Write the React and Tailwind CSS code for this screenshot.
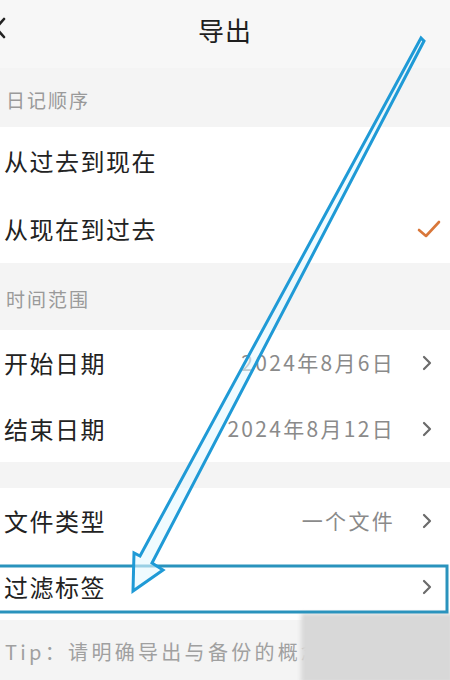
import React from "react";

const font = { fontFamily: '"Noto Sans CJK SC", "Noto Sans", sans-serif' };

function Chevron() {
  return (
    <svg width="12" height="16" viewBox="0 0 12 16" className="shrink-0">
      <path d="M3 2 L9 8 L3 14" fill="none" stroke="#6b6b6b" strokeWidth="2.2" strokeLinecap="round" strokeLinejoin="round" />
    </svg>
  );
}

function Section({ title, h = "h-[67px]" }) {
  return (
    <div className={`${h} bg-[#f4f4f4] flex items-center pl-[6px] pt-[6px]`}>
      {title && <span className="text-[19px] tracking-[2px] text-[#9a9a9a]">{title}</span>}
    </div>
  );
}

function Row({ label, value, chevron, check, h = "h-[66px]" }) {
  return (
    <div className={`${h} bg-white flex items-center pl-[4px] pr-[17px]`}>
      <span className="text-[24px] tracking-[1.5px] text-[#222222] flex-1">{label}</span>
      {value && <span className="text-[21px] tracking-[2.3px] text-[#8a8a8a] mr-[26px]">{value}</span>}
      {chevron && <Chevron />}
      {check && (
        <svg width="24" height="20" viewBox="0 0 24 20" className="-mr-[8px]">
          <path d="M2 11 L9 17 L22 3" fill="none" stroke="#d9773a" strokeWidth="2.6" strokeLinecap="round" strokeLinejoin="round" />
        </svg>
      )}
    </div>
  );
}

export default function App() {
  return (
    <div className="relative w-[450px] h-[680px] overflow-hidden bg-[#f4f4f4]" style={font}>
      <div className="h-[68px] bg-[#f7f7f7] flex items-center justify-center relative">
        <svg width="14" height="22" viewBox="0 0 14 22" className="absolute left-[-7px] top-[17px]">
          <path d="M11 2 L3 11 L11 20" fill="none" stroke="#222" strokeWidth="2.6" strokeLinecap="round" strokeLinejoin="round" />
        </svg>
        <span className="text-[26px] tracking-[1px] text-[#1e1e1e] pb-[10px]">导出</span>
      </div>
      <Section title="日记顺序" h="h-[59px]" />
      <Row label="从过去到现在" h="h-[68px]" />
      <Row label="从现在到过去" check h="h-[68px]" />
      <Section title="时间范围" />
      <Row label="开始日期" value="2024年8月6日" chevron />
      <Row label="结束日期" value="2024年8月12日" chevron />
      <Section h="h-[26px]" />
      <Row label="文件类型" value="一个文件" chevron />
      <Row label="过滤标签" chevron />
      <div className="flex items-center h-[60px] pl-[5px] pt-[4px]">
        <span className="text-[20px] tracking-[3.3px] text-[#a0a0a0] whitespace-nowrap">Tip：请明确导出与备份的概念</span>
      </div>

      <div className="absolute left-[301px] top-[613px] w-[152px] h-[70px] bg-[#d8d8d8] blur-[2px]" />

      <svg className="absolute left-0 top-0 pointer-events-none" width="450" height="680" viewBox="0 0 450 680">
        <rect x="-4" y="566" width="451" height="46" fill="none" stroke="#2a93bd" strokeWidth="3" />
        <polygon
          points="421,38 140,556 134,553 133,591 163,570 152,563 424,41"
          fill="rgba(230,248,255,0.6)"
          stroke="#1f9ad6"
          strokeWidth="3"
          strokeLinejoin="miter"
        />
      </svg>
    </div>
  );
}
